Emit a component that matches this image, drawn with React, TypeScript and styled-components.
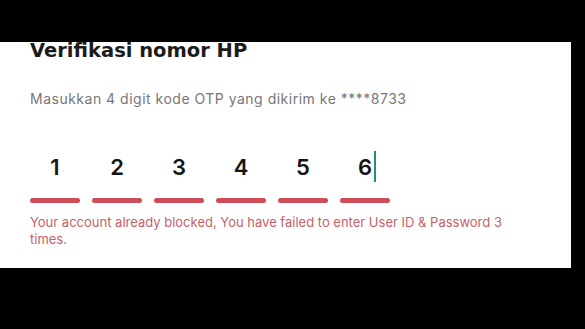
import React from "react";
import styled, { createGlobalStyle } from "styled-components";

const Global = createGlobalStyle`
  html, body { margin: 0; padding: 0; background: #000; }
  body { font-family: "Inter", "Liberation Sans", sans-serif; }
`;

const Page = styled.div`
  width: 585px;
  height: 329px;
  background: #000;
  padding-top: 42px;
  box-sizing: border-box;
`;

const Panel = styled.div`
  width: 571px;
  height: 226px;
  background: #fff;
  box-sizing: border-box;
  padding: 0 30px 0 30px;
  display: flex;
  flex-direction: column;
`;

const Title = styled.h1`
  margin: 0;
  font-family: "DejaVu Sans", "Inter", sans-serif;
  font-size: 19.5px;
  line-height: 20px;
  font-weight: 700;
  color: #1b1b1b;
  letter-spacing: 0px;
  margin-top: -1px;
`;

const Subtitle = styled.p`
  margin: 30px 0 0 0;
  font-size: 14px;
  line-height: 16px;
  color: #777777;
  font-weight: 400;
  letter-spacing: 0.5px;
`;

const OtpRow = styled.div`
  display: flex;
  gap: 12px;
  margin-top: 44px;
`;

const Cell = styled.div`
  width: 50px;
  display: flex;
  flex-direction: column;
  align-items: center;
`;

const DigitBox = styled.div`
  height: 32px;
  display: flex;
  align-items: center;
  justify-content: center;
  position: relative;
`;

const Digit = styled.span`
  font-size: 22px;
  font-weight: 600;
  color: #151515;
  line-height: 22px;
`;

const Caret = styled.span`
  position: absolute;
  left: calc(100% + 2px);
  top: 0;
  width: 2px;
  height: 31px;
  background: #1f8f80;
`;

const Underline = styled.div`
  width: 50px;
  height: 5px;
  border-radius: 3px;
  background: #cf4d59;
  margin-top: 15px;
`;

const ErrorText = styled.p`
  margin: 11px 0 0 0;
  width: 500px;
  font-size: 13px;
  line-height: 17px;
  color: #c65f69;
`;

const digits = ["1", "2", "3", "4", "5", "6"];

export default function App() {
  return (
    <>
      <Global />
      <Page>
        <Panel>
          <Title>Verifikasi nomor HP</Title>
          <Subtitle>Masukkan 4 digit kode OTP yang dikirim ke ****8733</Subtitle>
          <OtpRow>
            {digits.map((d, i) => (
              <Cell key={i}>
                <DigitBox>
                  <Digit>{d}</Digit>
                  {i === digits.length - 1 && <Caret />}
                </DigitBox>
                <Underline />
              </Cell>
            ))}
          </OtpRow>
          <ErrorText>
            Your account already blocked, You have failed to enter User ID &amp; Password 3 times.
          </ErrorText>
        </Panel>
      </Page>
    </>
  );
}
